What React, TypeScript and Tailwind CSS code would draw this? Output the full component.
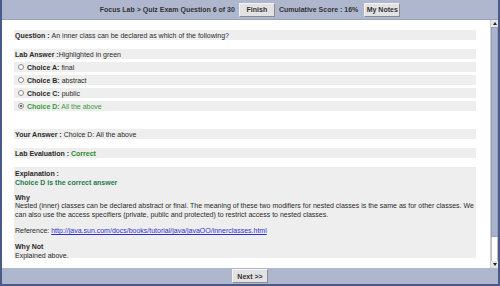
import React from "react";

const font = { fontFamily: '"Liberation Sans", Arial, sans-serif' };

function Btn({ label, className = "" }: { label: string; className?: string }) {
  return (
    <span
      className={`inline-flex h-[14px] items-center justify-center border border-t-[#f4f4f4] border-l-[#f4f4f4] border-r-[#8c8c8c] border-b-[#8c8c8c] bg-[#e2e2e2] text-[7px] font-bold text-[#333] ${className}`}
    >
      {label}
    </span>
  );
}

function Row({ children, className = "" }: { children: React.ReactNode; className?: string }) {
  return <div className={`flex h-[10px] shrink-0 items-center bg-[#eeeeee] pl-[1px] ${className}`}>{children}</div>;
}

function Choice({ letter, text, selected }: { letter: string; text: string; selected?: boolean }) {
  return (
    <Row className="h-[9px] pl-[4px]">
      <span className="mr-[3px] flex h-[6px] w-[6px] items-center justify-center rounded-full border border-[#8a8a8a] bg-white">
        {selected && <span className="h-[2px] w-[2px] rounded-full bg-[#333]" />}
      </span>
      <span className={selected ? "text-[#3a9a3a]" : ""}>
        <b>Choice {letter}:</b> {text}
      </span>
    </Row>
  );
}

export default function App() {
  return (
    <div
      className="flex h-[286px] w-[500px] flex-col overflow-hidden border-x-2 border-b-2 border-[#4a5987] bg-[#afb7cf] text-[7px] leading-[9px] text-[#2a2a2a]"
      style={font}
    >
      {/* top bar */}
      <div className="flex h-[20px] shrink-0 items-center justify-center gap-[4px] border-b border-[#9aa3bd] font-bold text-[#333]">
        <span className="text-[7px]">Focus Lab &gt; Quiz Exam Question 6 of 30</span>
        <Btn label="Finish" className="w-[36px]" />
        <span className="text-[7px]">Cumulative Score : 16%</span>
        <Btn label="My Notes" className="ml-[2px] w-[36px]" />
      </div>

      {/* content */}
      <div className="flex h-[248px] shrink-0 bg-white">
        <div className="flex flex-1 flex-col pl-[12px] pr-[14px] pt-[10px]">
          <Row>
            <b>Question :</b>&nbsp;An inner class can be declared as which of the following?
          </Row>
          <Row className="mt-[9px]">
            <b>Lab Answer :</b>Highlighted in green
          </Row>
          <div className="mt-[3px] flex shrink-0 flex-col gap-[3px]">
            <Choice letter="A" text="final" />
            <Choice letter="B" text="abstract" />
            <Choice letter="C" text="public" />
            <Choice letter="D" text="All the above" selected />
          </div>
          <Row className="mt-[18px] h-[9px]">
            <b>Your Answer :</b>&nbsp;Choice D: All the above
          </Row>
          <Row className="mt-[9px] h-[9px]">
            <b>Lab Evaluation :</b>&nbsp;<b className="text-[#2a8a2a]">Correct</b>
          </Row>
          <div className="mt-[9px] flex h-[91px] shrink-0 flex-col bg-[#eeeeee] pl-[1px] pt-[2px]">
            <b>Explanation :</b>
            <b className="text-[#1f7a4a]">Choice D is the correct answer</b>
            <b className="mt-[6px]">Why</b>
            <div className="leading-[8.5px]">
              <div className="whitespace-nowrap">
                Nested (inner) classes can be declared abstract or final. The meaning of these two modifiers for nested
                classes is the same as for other classes. We
              </div>
              <div className="whitespace-nowrap">
                can also use the access specifiers (private, public and protected) to restrict access to nested classes.
              </div>
            </div>
            <p className="mt-[7px]">
              Reference:{" "}
              <span className="text-[#3030d0] underline">
                http://java.sun.com/docs/books/tutorial/java/javaOO/innerclasses.html
              </span>
            </p>
            <b className="mt-[7px]">Why Not</b>
            <span>Explained above.</span>
          </div>
        </div>

        {/* scrollbar */}
        <div className="flex w-[8px] flex-col border-l border-[#c8ccd8] bg-[#f4f4f4]">
          <div className="flex h-[7px] items-center justify-center bg-[#e6e6e6]">
            <span className="h-0 w-0 border-x-[2px] border-b-[3px] border-x-transparent border-b-[#222]" />
          </div>
          <div className="h-[210px] border border-[#98a0b8] bg-[#aab2cc]" />
          <div className="flex-1 border-x border-[#c0c0c0] bg-white" />
          <div className="flex h-[7px] items-center justify-center bg-[#e6e6e6]">
            <span className="h-0 w-0 border-x-[2px] border-t-[3px] border-x-transparent border-t-[#222]" />
          </div>
        </div>
      </div>

      {/* bottom bar */}
      <div className="flex flex-1 items-center justify-center">
        <Btn label="Next >>" className="h-[13px] w-[36px]" />
      </div>
    </div>
  );
}
